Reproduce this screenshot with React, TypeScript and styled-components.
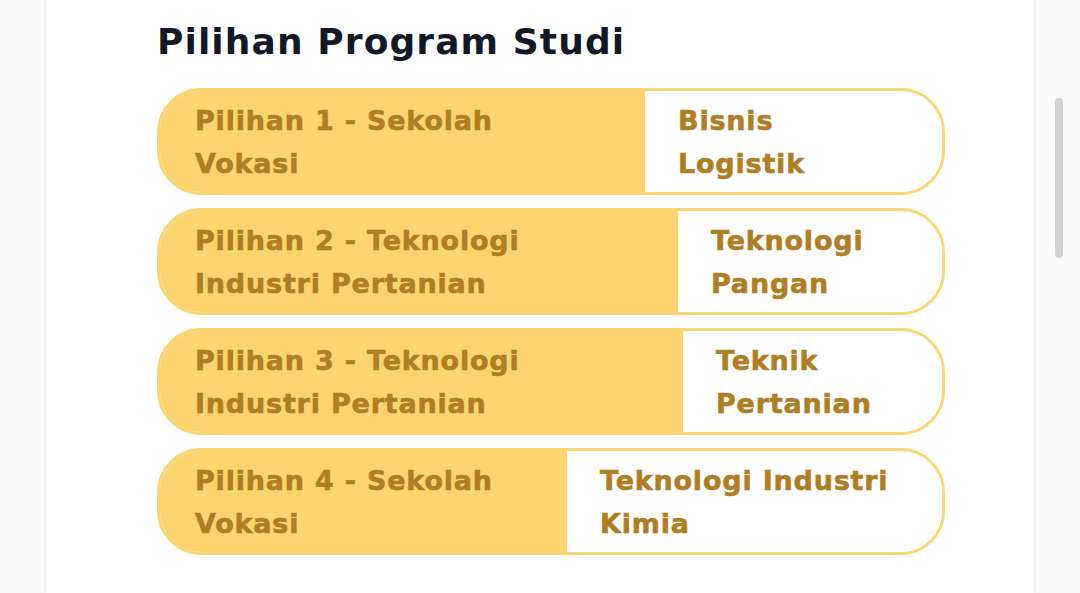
import React from "react";
import styled, { createGlobalStyle } from "styled-components";

const GlobalStyle = createGlobalStyle`
  html, body { margin: 0; padding: 0; }
  body {
    background: #fafafa;
    font-family: "DejaVu Sans", "Liberation Sans", sans-serif;
  }
`;

const Page = styled.div`
  position: relative;
  height: 593px;
  overflow: hidden;
  display: flex;
`;

const Card = styled.main`
  margin-left: 46px;
  width: 988px;
  background: #ffffff;
  box-shadow: 0 0 3px rgba(0, 0, 0, 0.14);
  padding: 20px 0 0 111px;
  box-sizing: border-box;
`;

const Heading = styled.h2`
  margin: 0 0 24px;
  font-size: 36px;
  line-height: 44px;
  font-weight: 700;
  color: #111827;
  letter-spacing: 1.1px;
`;

const List = styled.div`
  display: flex;
  flex-direction: column;
  gap: 13px;
  width: 788px;
`;

const Row = styled.div`
  display: flex;
  height: 107px;
  box-sizing: border-box;
  border: 3px solid #fcd571;
  border-radius: 44px;
  overflow: hidden;
`;

const Cell = styled.div`
  display: flex;
  align-items: center;
  box-sizing: border-box;
  font-size: 27px;
  line-height: 43px;
  font-weight: 700;
  letter-spacing: 0.8px;
  color: #b07e22;
  -webkit-text-stroke: 0.6px #b07e22;
`;

const Label = styled(Cell)<{ $w: number }>`
  width: ${(p) => p.$w}px;
  flex: none;
  background: #fcd571;
  padding-left: 35px;
`;

const Value = styled(Cell)`
  flex: 1;
  background: #ffffff;
  padding-left: 33px;
`;

const Thumb = styled.div`
  position: absolute;
  left: 1055px;
  top: 98px;
  width: 8px;
  height: 160px;
  border-radius: 4px;
  background: #d3d3d3;
`;

const rows = [
  { w: 485, label: ["Pilihan 1 - Sekolah", "Vokasi"], value: ["Bisnis", "Logistik"] },
  { w: 518, label: ["Pilihan 2 - Teknologi", "Industri Pertanian"], value: ["Teknologi", "Pangan"] },
  { w: 523, label: ["Pilihan 3 - Teknologi", "Industri Pertanian"], value: ["Teknik", "Pertanian"] },
  { w: 407, label: ["Pilihan 4 - Sekolah", "Vokasi"], value: ["Teknologi Industri", "Kimia"] },
];

const Lines = ({ lines }: { lines: string[] }) => (
  <div>
    {lines.map((l, i) => (
      <React.Fragment key={i}>
        {i > 0 && <br />}
        {l}
      </React.Fragment>
    ))}
  </div>
);

export default function App() {
  return (
    <>
      <GlobalStyle />
      <Page>
        <Card>
          <Heading>Pilihan Program Studi</Heading>
          <List>
            {rows.map((r, i) => (
              <Row key={i}>
                <Label $w={r.w}>
                  <Lines lines={r.label} />
                </Label>
                <Value>
                  <Lines lines={r.value} />
                </Value>
              </Row>
            ))}
          </List>
        </Card>
        <Thumb />
      </Page>
    </>
  );
}
